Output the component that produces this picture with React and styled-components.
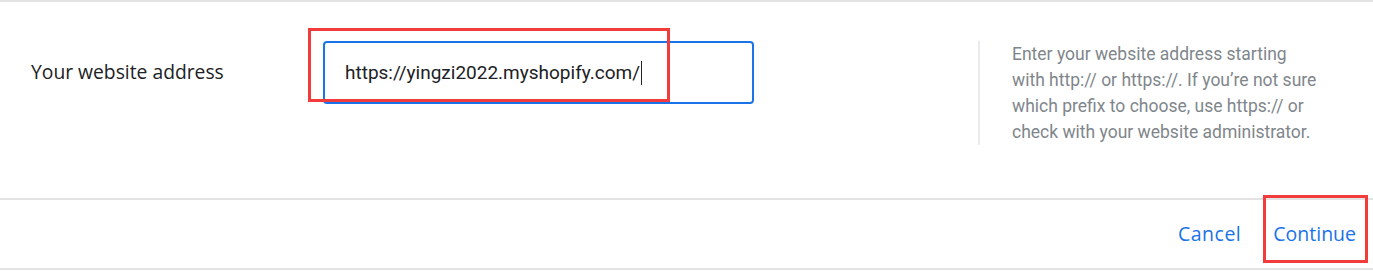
import React from "react";
import styled, { createGlobalStyle } from "styled-components";

const Global = createGlobalStyle`
  body { margin: 0; background: #fff; }
  * { box-sizing: border-box; }
`;

const Page = styled.div`
  width: 1373px;
  height: 271px;
  border-top: 2px solid #e3e3e3;
  display: flex;
  flex-direction: column;
`;

const Body = styled.div`
  height: 196px;
  display: flex;
  align-items: flex-start;
  padding: 38px 0 0 31px;
`;

const Label = styled.div`
  width: 292px;
  height: 63px;
  display: flex;
  align-items: center;
  font-family: "Open Sans", sans-serif;
  font-size: 19.3px;
  font-weight: 500;
  color: #202124;
`;

const FieldWrap = styled.div`
  position: relative;
  margin-top: 1px;
`;

const Field = styled.div`
  width: 431px;
  height: 63px;
  border: 2px solid #1a73e8;
  border-radius: 4px;
  display: flex;
  align-items: center;
  padding-left: 20px;
  font-family: Roboto, sans-serif;
  font-size: 19px;
  color: #202124;
`;

const Caret = styled.span`
  display: inline-block;
  width: 1px;
  height: 24px;
  background: #202124;
  margin-left: 1px;
`;

const Highlight = styled.div`
  position: absolute;
  border: 3px solid #f23b3b;
  pointer-events: none;
  left: ${(p) => p.$l}px;
  top: ${(p) => p.$t}px;
  width: ${(p) => p.$w}px;
  height: ${(p) => p.$h}px;
`;

const Help = styled.div`
  margin-left: 224px;
  margin-top: 1px;
  width: 342px;
  border-left: 2px solid #e8eaed;
  padding: 0 0 0 32px;
  font-family: Roboto, sans-serif;
  font-size: 17.5px;
  line-height: 26px;
  color: #80868b;
`;

const Footer = styled.div`
  height: 72px;
  border-top: 2px solid #e3e3e3;
  border-bottom: 2px solid #e3e3e3;
  display: flex;
  justify-content: flex-end;
  align-items: center;
  padding-right: 17px;
  gap: 32px;
`;

const ButtonWrap = styled.div`
  position: relative;
  display: flex;
`;

const TextButton = styled.button`
  background: none;
  border: none;
  padding: 0;
  font-family: "Open Sans", sans-serif;
  font-size: 19.5px;
  font-weight: 500;
  line-height: 24px;
  letter-spacing: ${(p) => (p.$wide ? "0.5px" : "0")};
  color: #1a73e8;
  cursor: pointer;
`;

export default function App() {
  return (
    <>
      <Global />
      <Page>
        <Body>
          <Label>Your website address</Label>
          <FieldWrap>
            <Field>
              https://yingzi2022.myshopify.com/
              <Caret />
            </Field>
            <Highlight $l={-15} $t={-13} $w={362} $h={74} />
          </FieldWrap>
          <Help>
            Enter your website address starting with http:// or https://. If
            you’re not sure which prefix to choose, use https:// or check with
            your website administrator.
          </Help>
        </Body>
        <Footer>
          <TextButton $wide>Cancel</TextButton>
          <ButtonWrap>
            <TextButton>Continue</TextButton>
            <Highlight $l={-10} $t={-27} $w={105} $h={68} />
          </ButtonWrap>
        </Footer>
      </Page>
    </>
  );
}
